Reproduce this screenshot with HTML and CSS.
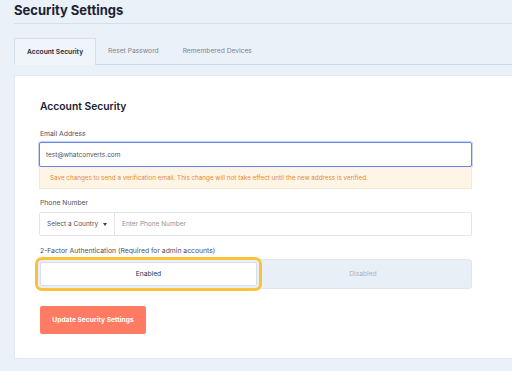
FILE: index.html
```html
<!DOCTYPE html>
<html lang="en">

<head>
    <meta charset="UTF-8">
    <meta name="viewport" content="width=device-width, initial-scale=1.0">
    <title>Security Settings</title>
    <link rel="stylesheet" href="styles.css">
</head>

<body>
    <div class="page">
        <header class="page-header">
            <h1>Security Settings</h1>
        </header>

        <nav class="tabs">
            <a class="tab active">Account Security</a>
            <a class="tab">Reset Password</a>
            <a class="tab">Remembered Devices</a>
        </nav>

        <main class="card">
            <div class="form">
                <h2>Account Security</h2>

                <label class="label">Email Address</label>
                <div class="email-input">test@whatconverts.com</div>
                <div class="notice">Save changes to send a verification email. This change will not take effect until the new address is verified.</div>

                <label class="label phone-label">Phone Number</label>
                <div class="phone-group">
                    <div class="country">Select a Country <span class="caret"></span></div>
                    <div class="phone-input">Enter Phone Number</div>
                </div>

                <label class="label tfa-label">2-Factor Authentication (Required for admin accounts)</label>
                <div class="toggle">
                    <div class="option enabled">Enabled</div>
                    <div class="option">Disabled</div>
                </div>

                <button class="submit">Update Security Settings</button>
            </div>
        </main>
    </div>
</body>

</html>
```

FILE: styles.css
```css
body {
    font-family: Inter, "Liberation Sans", sans-serif;
    background-color: #eaf1f8;
    margin: 0;
    padding: 0;
    overflow: hidden;
}

.page {
    padding-left: 14px;
}

.page-header {
    height: 23px;
    border-bottom: 1px solid #d6dee8;
}

.page-header h1 {
    margin: 0;
    padding-top: 2px;
    font-size: 13px;
    line-height: 16px;
    font-weight: 700;
    color: #1c2233;
}

.tabs {
    display: flex;
    margin-top: 14px;
    border-bottom: 1px solid #c9d9eb;
    height: 26px;
}

.tab {
    display: flex;
    align-items: center;
    padding: 0 12px;
    font-size: 6.7px;
    color: #7c8593;
}

.tab.active {
    color: #222838;
    font-weight: 600;
    background-color: #eff5fb;
    border: 1px solid #d3dfeb;
    border-bottom: none;
    margin-bottom: -1px;
    height: 26px;
}

.card {
    margin-top: 10px;
    background-color: #fff;
    border: 1px solid #e2e8ef;
    border-right: none;
    padding: 22px 0 24px 24px;
}

.form {
    width: 433px;
}

.form h2 {
    margin: 0 0 15px 1px;
    font-size: 10.3px;
    line-height: 16px;
    font-weight: 600;
    color: #1c2233;
}

.label {
    display: block;
    margin: 0 0 3px 1px;
    font-size: 6.8px;
    line-height: 10px;
    color: #4a5262;
}

.email-input {
    height: 25px;
    box-sizing: border-box;
    border: 1px solid #6685e6;
    border-radius: 2px;
    box-shadow: 0 0 0 1px #c9d5f5;
    padding: 0 6px;
    display: flex;
    align-items: center;
    font-size: 6.5px;
    color: #4c5363;
}

.notice {
    height: 22px;
    box-sizing: border-box;
    background-color: #fef5e6;
    border: 1px solid #f5e9d2;
    border-top: none;
    padding: 0 10px;
    display: flex;
    align-items: center;
    font-size: 6.3px;
    color: #e3893a;
}

.phone-label {
    margin-top: 9px;
    margin-bottom: 4px;
}

.phone-group {
    display: flex;
    height: 24px;
    box-sizing: border-box;
    border: 1px solid #e1e6ee;
    border-radius: 2px;
    font-size: 6.5px;
}

.country {
    width: 75px;
    box-sizing: border-box;
    border-right: 1px solid #e1e6ee;
    padding: 0 7px;
    display: flex;
    align-items: center;
    justify-content: space-between;
    color: #4c5363;
}

.caret {
    width: 0;
    height: 0;
    border-left: 2.5px solid transparent;
    border-right: 2.5px solid transparent;
    border-top: 3px solid #3a4150;
}

.phone-input {
    padding: 0 7px;
    display: flex;
    align-items: center;
    color: #8a93a3;
}

.tfa-label {
    margin-top: 10px;
    margin-bottom: 3px;
}

.toggle {
    display: flex;
    height: 30px;
    box-sizing: border-box;
    margin-left: -2px;
    padding: 2px;
    background-color: #e9eff7;
    border: 1px solid #dee6ef;
    border-radius: 3px;
}

.option {
    flex: 1;
    display: flex;
    align-items: center;
    justify-content: center;
    font-size: 6.7px;
    color: #a9b1be;
}

.option.enabled {
    flex: 0 0 217px;
    box-sizing: border-box;
    background-color: #fff;
    border: 1px solid #d7dee8;
    border-radius: 2px;
    color: #2a3040;
    outline: 3px solid #fcc13c;
    outline-offset: 2px;
}

.submit {
    display: block;
    margin: 17px 0 0 1px;
    height: 28px;
    width: 106px;
    border: none;
    border-radius: 2px;
    background-color: #ff7b63;
    color: #fff;
    font-family: inherit;
    font-size: 6.7px;
    font-weight: 700;
}
```
